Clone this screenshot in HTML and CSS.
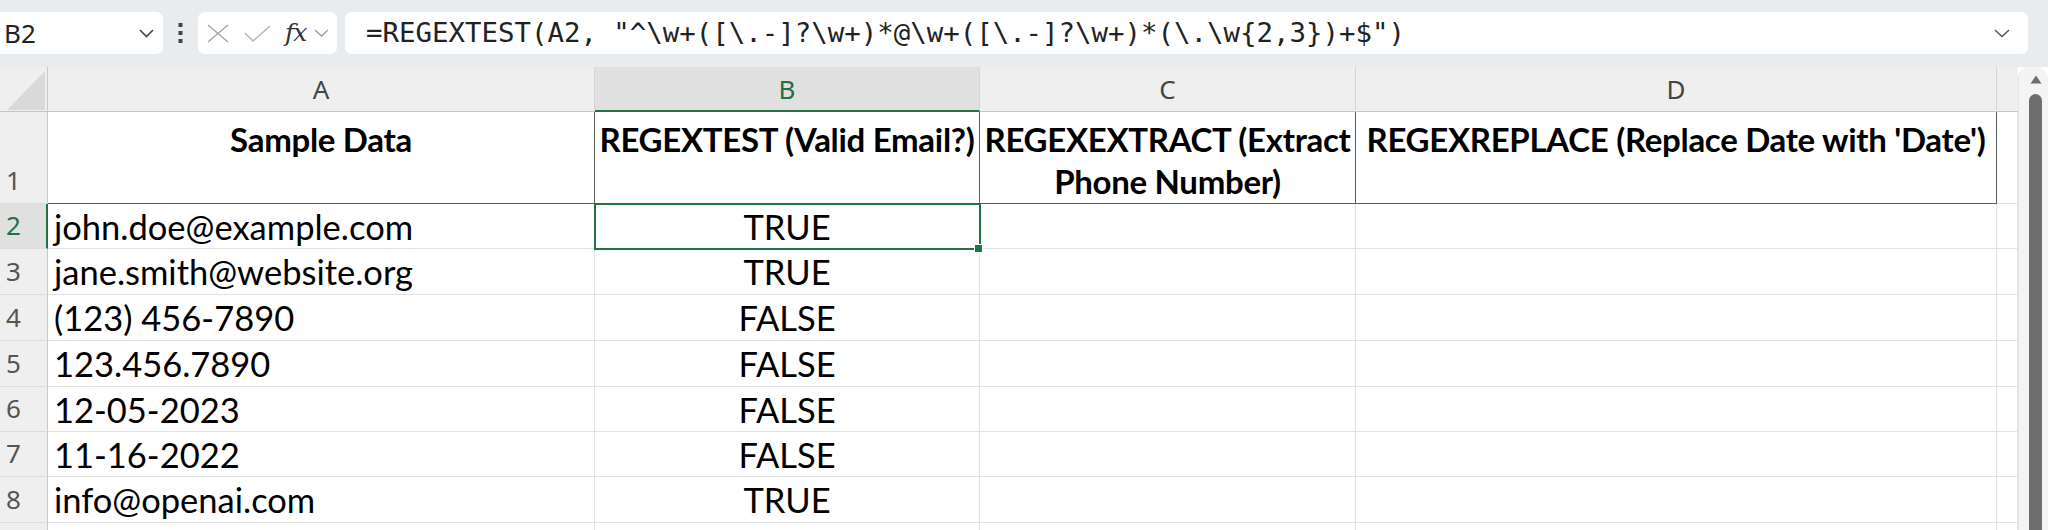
FILE: index.html
```html
<!DOCTYPE html>
<html>
<head>
<meta charset="utf-8">
<link rel="stylesheet" href="styles.css">
</head>
<body>
<div class="app">
  <div class="toolbar">
    <div class="namebox">
      <span class="nb-text">B2</span>
      <svg class="chev" width="15" height="9" viewBox="0 0 15 9"><path d="M1 1 L7.5 7.5 L14 1" fill="none" stroke="#444" stroke-width="1.6"/></svg>
    </div>
    <div class="dots">
      <svg width="5" height="22" viewBox="0 0 5 22"><rect x="0.5" y="1" width="4" height="4" fill="#444"/><rect x="0.5" y="9" width="4" height="4" fill="#444"/><rect x="0.5" y="17" width="4" height="4" fill="#444"/></svg>
    </div>
    <div class="fxbox">
      <svg class="ico-x" width="22" height="19" viewBox="0 0 22 19"><path d="M1 1 L21 18 M21 1 L1 18" fill="none" stroke="#a6a6a6" stroke-width="1.4"/></svg>
      <svg class="ico-check" width="27" height="17" viewBox="0 0 27 17"><path d="M1 8 L9 16 L26 1" fill="none" stroke="#b3b3b3" stroke-width="1.4"/></svg>
      <span class="fx">fx</span>
      <svg class="chev-s" width="15" height="8" viewBox="0 0 15 8"><path d="M1 1 L7.5 7 L14 1" fill="none" stroke="#9a9a9a" stroke-width="1.3"/></svg>
    </div>
    <div class="formula">
      <span class="ftext">=REGEXTEST(A2, "^\w+([\.-]?\w+)*@\w+([\.-]?\w+)*(\.\w{2,3})+$")</span>
      <svg class="chev-f" width="16" height="9" viewBox="0 0 16 9"><path d="M1 1 L8 7.5 L15 1" fill="none" stroke="#555" stroke-width="1.4"/></svg>
    </div>
  </div>
  <div class="main">
    <div class="grid">
      <!-- header row -->
      <div class="corner"><svg width="48" height="45" viewBox="0 0 48 45"><path d="M45 4 L45 43 L7 43 Z" fill="#d9d9d9"/></svg></div>
      <div class="ch">A</div>
      <div class="ch ch-sel">B</div>
      <div class="ch">C</div>
      <div class="ch">D</div>
      <div class="ch ch-e"></div>

      <!-- row 1 -->
      <div class="rh">1</div>
      <div class="c hd">Sample Data</div>
      <div class="c hd">REGEXTEST (Valid Email?)</div>
      <div class="c hd">REGEXEXTRACT (Extract Phone Number)</div>
      <div class="c hd">REGEXREPLACE (Replace Date with 'Date')</div>
      <div class="c"></div>

      <!-- row 2 -->
      <div class="rh rh-sel">2</div>
      <div class="c">john.doe@example.com</div>
      <div class="c ctr active">TRUE<span class="selbox"><span class="handle"></span></span></div>
      <div class="c"></div>
      <div class="c"></div>
      <div class="c"></div>

      <div class="rh">3</div>
      <div class="c">jane.smith@website.org</div>
      <div class="c ctr">TRUE</div>
      <div class="c"></div>
      <div class="c"></div>
      <div class="c"></div>

      <div class="rh">4</div>
      <div class="c">(123) 456-7890</div>
      <div class="c ctr">FALSE</div>
      <div class="c"></div>
      <div class="c"></div>
      <div class="c"></div>

      <div class="rh">5</div>
      <div class="c">123.456.7890</div>
      <div class="c ctr">FALSE</div>
      <div class="c"></div>
      <div class="c"></div>
      <div class="c"></div>

      <div class="rh">6</div>
      <div class="c">12-05-2023</div>
      <div class="c ctr">FALSE</div>
      <div class="c"></div>
      <div class="c"></div>
      <div class="c"></div>

      <div class="rh">7</div>
      <div class="c">11-16-2022</div>
      <div class="c ctr">FALSE</div>
      <div class="c"></div>
      <div class="c"></div>
      <div class="c"></div>

      <div class="rh">8</div>
      <div class="c">info@openai.com</div>
      <div class="c ctr">TRUE</div>
      <div class="c"></div>
      <div class="c"></div>
      <div class="c"></div>

      <div class="rh"></div>
      <div class="c"></div>
      <div class="c"></div>
      <div class="c"></div>
      <div class="c"></div>
      <div class="c"></div>
    </div>
    <div class="scrollbar">
      <svg class="sb-arrow" width="12" height="9" viewBox="0 0 12 9"><path d="M6 0.5 L11.5 8.5 L0.5 8.5 Z" fill="#6e6e6e"/></svg>
      <div class="sb-thumb"></div>
    </div>
  </div>
</div>
</body>
</html>
```

FILE: styles.css
```css
html, body {
  margin: 0;
  padding: 0;
}
body {
  width: 2048px;
  height: 530px;
  overflow: hidden;
  background: #ffffff;
}
.app {
  width: 2048px;
  height: 530px;
  display: flex;
  flex-direction: column;
}

/* ---------- toolbar ---------- */
.toolbar {
  height: 67px;
  flex: none;
  box-sizing: border-box;
  padding-top: 12px;
  background: #e9ecef;
  display: flex;
  align-items: flex-start;
}
.namebox {
  margin-left: -8px;
  width: 171px;
  height: 42px;
  box-sizing: border-box;
  padding: 0 9px 0 12px;
  background: #ffffff;
  border-radius: 7px;
  display: flex;
  align-items: center;
  justify-content: space-between;
}
.nb-text {
  font-family: "Noto Sans", "Open Sans", sans-serif;
  font-size: 26px;
  color: #222222;
  line-height: 42px;
}
.dots {
  width: 35px;
  height: 42px;
  display: flex;
  align-items: center;
  justify-content: center;
}
.fxbox {
  width: 139px;
  height: 42px;
  box-sizing: border-box;
  padding-left: 9px;
  background: #ffffff;
  border-radius: 7px;
  display: flex;
  align-items: center;
}
.ico-x { margin-right: 15px; }
.ico-check { margin-right: 14px; }
.fx {
  font-family: "DejaVu Serif", "Liberation Serif", serif;
  font-style: italic;
  font-size: 25px;
  color: #333333;
  line-height: 42px;
  margin-right: 8px;
  letter-spacing: -1px;
}
.formula {
  margin-left: 8px;
  margin-right: 20px;
  flex: 1;
  height: 42px;
  box-sizing: border-box;
  padding: 0 18px 0 21px;
  background: #ffffff;
  border-radius: 7px;
  display: flex;
  align-items: center;
}
.ftext {
  font-family: "DejaVu Sans Mono", "Liberation Mono", monospace;
  font-size: 27.4px;
  color: #222222;
  white-space: pre;
  line-height: 42px;
}
.chev-f { margin-left: auto; }

/* ---------- sheet ---------- */
.main {
  flex: 1;
  display: flex;
  overflow: hidden;
}
.grid {
  width: 2018px;
  flex: none;
  display: grid;
  grid-template-columns: 48px 547px 385px 376px 641px 21px;
  grid-template-rows: 45px 92px 45px 46px 46px 46px 45px 45px 46px 46px;
  font-family: "Lato", "Liberation Sans", sans-serif;
}
.corner {
  background: #efefef;
  border-right: 1px solid #c9c9c9;
  border-bottom: 1px solid #c4c4c4;
  box-sizing: border-box;
  overflow: hidden;
}
.corner svg { display: block; }
.ch {
  background: #efefef;
  border-right: 1px solid #d6d6d6;
  border-bottom: 1px solid #c4c4c4;
  box-sizing: border-box;
  font-family: "Noto Sans", "Open Sans", sans-serif;
  font-size: 26px;
  color: #444444;
  display: flex;
  align-items: center;
  justify-content: center;
  line-height: 1;
}
.ch-sel {
  background: #e0e0e0;
  color: #1e7145;
  border-bottom: 2px solid #217346;
}
.ch-e { border-right: none; }
.rh {
  background: #efefef;
  border-right: 1px solid #c9c9c9;
  border-bottom: 1px solid #dcdcdc;
  box-sizing: border-box;
  font-family: "Noto Sans", "Open Sans", sans-serif;
  font-size: 26px;
  color: #555555;
  line-height: 45px;
  padding-left: 6px;
  display: flex;
  align-items: flex-end;
}
.rh-sel {
  background: #e0e0e0;
  color: #1e7145;
  border-right: 2px solid #217346;
}
.c {
  border-right: 1px solid #e2e2e2;
  border-bottom: 1px solid #e2e2e2;
  box-sizing: border-box;
  font-size: 34.5px;
  color: #000000;
  line-height: 45px;
  padding-left: 6px;
  white-space: nowrap;
  overflow: visible;
}
.c.hd {
  font-size: 33px;
  font-weight: 700;
  letter-spacing: -0.3px;
  text-align: center;
  white-space: normal;
  line-height: 42px;
  padding: 6px 0 0 0;
  border-right: 1px solid #5c5c5c;
  border-bottom: 1px solid #5c5c5c;
}
.ctr {
  text-align: center;
  padding-left: 0;
}
.active {
  position: relative;
}
.selbox {
  position: absolute;
  top: -1px;
  left: -1px;
  right: -2px;
  bottom: -2px;
  border: 2px solid #217346;
  pointer-events: none;
}
.handle {
  position: absolute;
  right: -3px;
  bottom: -4px;
  width: 7px;
  height: 7px;
  background: #217346;
  outline: 1px solid #ffffff;
}

/* ---------- scrollbar ---------- */
.scrollbar {
  width: 30px;
  flex: none;
  background: #f4f4f4;
  border-left: 1px solid #e6e6e6;
  box-sizing: border-box;
  border-radius: 12px 12px 0 0;
  display: flex;
  flex-direction: column;
  align-items: center;
  padding-top: 8px;
}
.sb-arrow {
  display: block;
  margin-left: 4px;
}
.sb-thumb {
  margin-top: 10px;
  margin-left: 4px;
  width: 13px;
  flex: 1;
  background: #6e6e6e;
  border-radius: 7px 7px 0 0;
}
```
